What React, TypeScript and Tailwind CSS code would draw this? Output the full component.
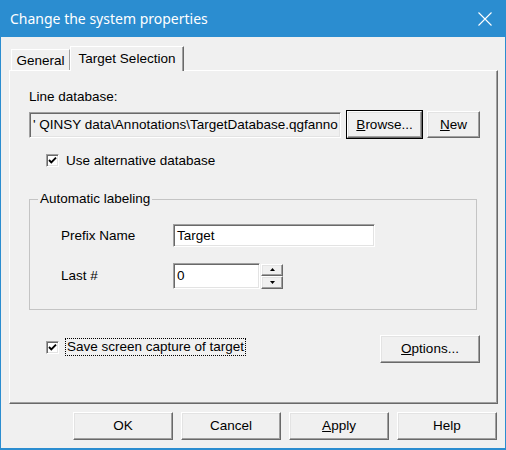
import React from 'react';

/**
 * 시스템 속성 대화상자 (Windows classic 스타일)
 */

const raised =
  'border border-t-white border-l-white border-r-[#696969] border-b-[#696969] shadow-[inset_-1px_-1px_0_#a0a0a0,inset_1px_1px_0_#e3e3e3] bg-[#f0f0f0]';
const sunken =
  'border border-t-[#a0a0a0] border-l-[#a0a0a0] border-r-white border-b-white shadow-[inset_1px_1px_0_#696969,inset_-1px_-1px_0_#e3e3e3]';

function Button({ children, className = '' }: { children: React.ReactNode; className?: string }) {
  return (
    <div className={`${raised} flex items-center justify-center text-black ${className}`}>{children}</div>
  );
}

function CheckBox() {
  return (
    <div className={`${sunken} w-[13px] h-[13px] bg-white flex items-center justify-center shrink-0`}>
      <svg width="9" height="9" viewBox="0 0 9 9">
        <path d="M1 4 L3.3 6.3 L8 1.6" fill="none" stroke="#000" strokeWidth="1.9" />
      </svg>
    </div>
  );
}

export default function App() {
  return (
    <div className="w-[506px] h-[450px] bg-[#2b8dd0] flex flex-col font-['Liberation_Sans',Arial,sans-serif] text-[13.5px] leading-[16px] text-black">
      {/* 제목 표시줄 */}
      <div className="h-[37px] shrink-0 flex items-center justify-between pl-[10px] pr-[14px]">
        <span className="font-['Noto_Sans',sans-serif] text-[14px] text-white">Change the system properties</span>
        <svg width="14" height="14" viewBox="0 0 14 14">
          <path d="M0.5 0.5 L13.5 13.5 M13.5 0.5 L0.5 13.5" stroke="#fff" strokeWidth="1.1" />
        </svg>
      </div>

      {/* 본문 */}
      <div className="mx-[1px] mb-[2px] flex-1 bg-[#f0f0f0] flex flex-col">
        {/* 탭 */}
        <div className="h-[33px] flex items-end pl-[10px]">
          <div className="w-[59px] h-[21px] border border-b-0 border-t-white border-l-white border-r-[#a0a0a0] flex items-center justify-center pt-[1px]">
            General
          </div>
          <div className="relative z-10 -mb-[1px] w-[114px] h-[25px] bg-[#f0f0f0] border border-b-0 border-t-white border-l-white border-r-[#696969] shadow-[inset_-1px_0_0_#a0a0a0] flex items-center justify-center pb-[1px]">
            Target Selection
          </div>
        </div>

        {/* 탭 패널 */}
        <div className="ml-[8px] w-[489px] h-[334px] border border-t-white border-l-white border-r-[#696969] border-b-[#696969] shadow-[inset_-1px_-1px_0_#a0a0a0] pl-[19px] flex flex-col">
          <div className="mt-[18px]">Line database:</div>

          <div className="mt-[5px] flex items-start">
            <div className={`${sunken} mt-[2px] w-[312px] h-[26px] bg-[#f0f0f0] flex items-center pl-[3px] overflow-hidden whitespace-nowrap`}>
              ' QINSY data\Annotations\TargetDatabase.qgfanno
            </div>
            <div className="ml-[5px] w-[77px] h-[29px] border border-black">
              <Button className="w-full h-full">
                <span><span className="underline">B</span>rowse...</span>
              </Button>
            </div>
            <Button className="ml-[4px] mt-[1px] w-[53px] h-[27px]">
              <span><span className="underline">N</span>ew</span>
            </Button>
          </div>

          <div className="mt-[15px] ml-[17px] flex items-center gap-[7px] h-[13px]">
            <CheckBox />
            <span>Use alternative database</span>
          </div>

          {/* 자동 라벨링 그룹 */}
          <fieldset className="mt-[24px] w-[448px] h-[119px] border border-[#c4c4c4] p-0">
            <legend className="ml-[8px] px-[2px]">Automatic labeling</legend>
            <div className="pt-[17px] pl-[31px]">
              <div className="flex items-center">
                <span className="w-[112px]">Prefix Name</span>
                <div className={`${sunken} w-[202px] h-[23px] bg-white flex items-center pl-[3px]`}>Target</div>
              </div>
              <div className="mt-[16px] flex items-center">
                <span className="w-[112px]">Last #</span>
                <div className={`${sunken} w-[87px] h-[26px] bg-white flex items-center pl-[3px]`}>0</div>
                <div className="ml-[1px] flex flex-col">
                  <Button className="w-[22px] h-[12px]">
                    <svg width="5" height="3" viewBox="0 0 5 3"><path d="M2.5 0 L5 3 L0 3 Z" fill="#000" /></svg>
                  </Button>
                  <Button className="w-[22px] h-[13px]">
                    <svg width="5" height="3" viewBox="0 0 5 3"><path d="M0 0 L5 0 L2.5 3 Z" fill="#000" /></svg>
                  </Button>
                </div>
              </div>
            </div>
          </fieldset>

          <div className="mt-[25px] flex items-start justify-between w-[451px]">
            <div className="mt-[3px] ml-[17px] flex items-center gap-[6px]">
              <CheckBox />
              <span className="h-[18px] border border-dotted border-black px-[1px] flex items-center">
                Save screen capture of target
              </span>
            </div>
            <Button className="w-[100px] h-[28px]">
              <span><span className="underline">O</span>ptions...</span>
            </Button>
          </div>
        </div>

        {/* 하단 버튼 */}
        <div className="mt-[8px] flex justify-end gap-[8px] pr-[8px]">
          <Button className="w-[100px] h-[28px]">OK</Button>
          <Button className="w-[100px] h-[28px]">Cancel</Button>
          <Button className="w-[100px] h-[28px]">
            <span><span className="underline">A</span>pply</span>
          </Button>
          <Button className="w-[100px] h-[28px]">Help</Button>
        </div>
      </div>
    </div>
  );
}
